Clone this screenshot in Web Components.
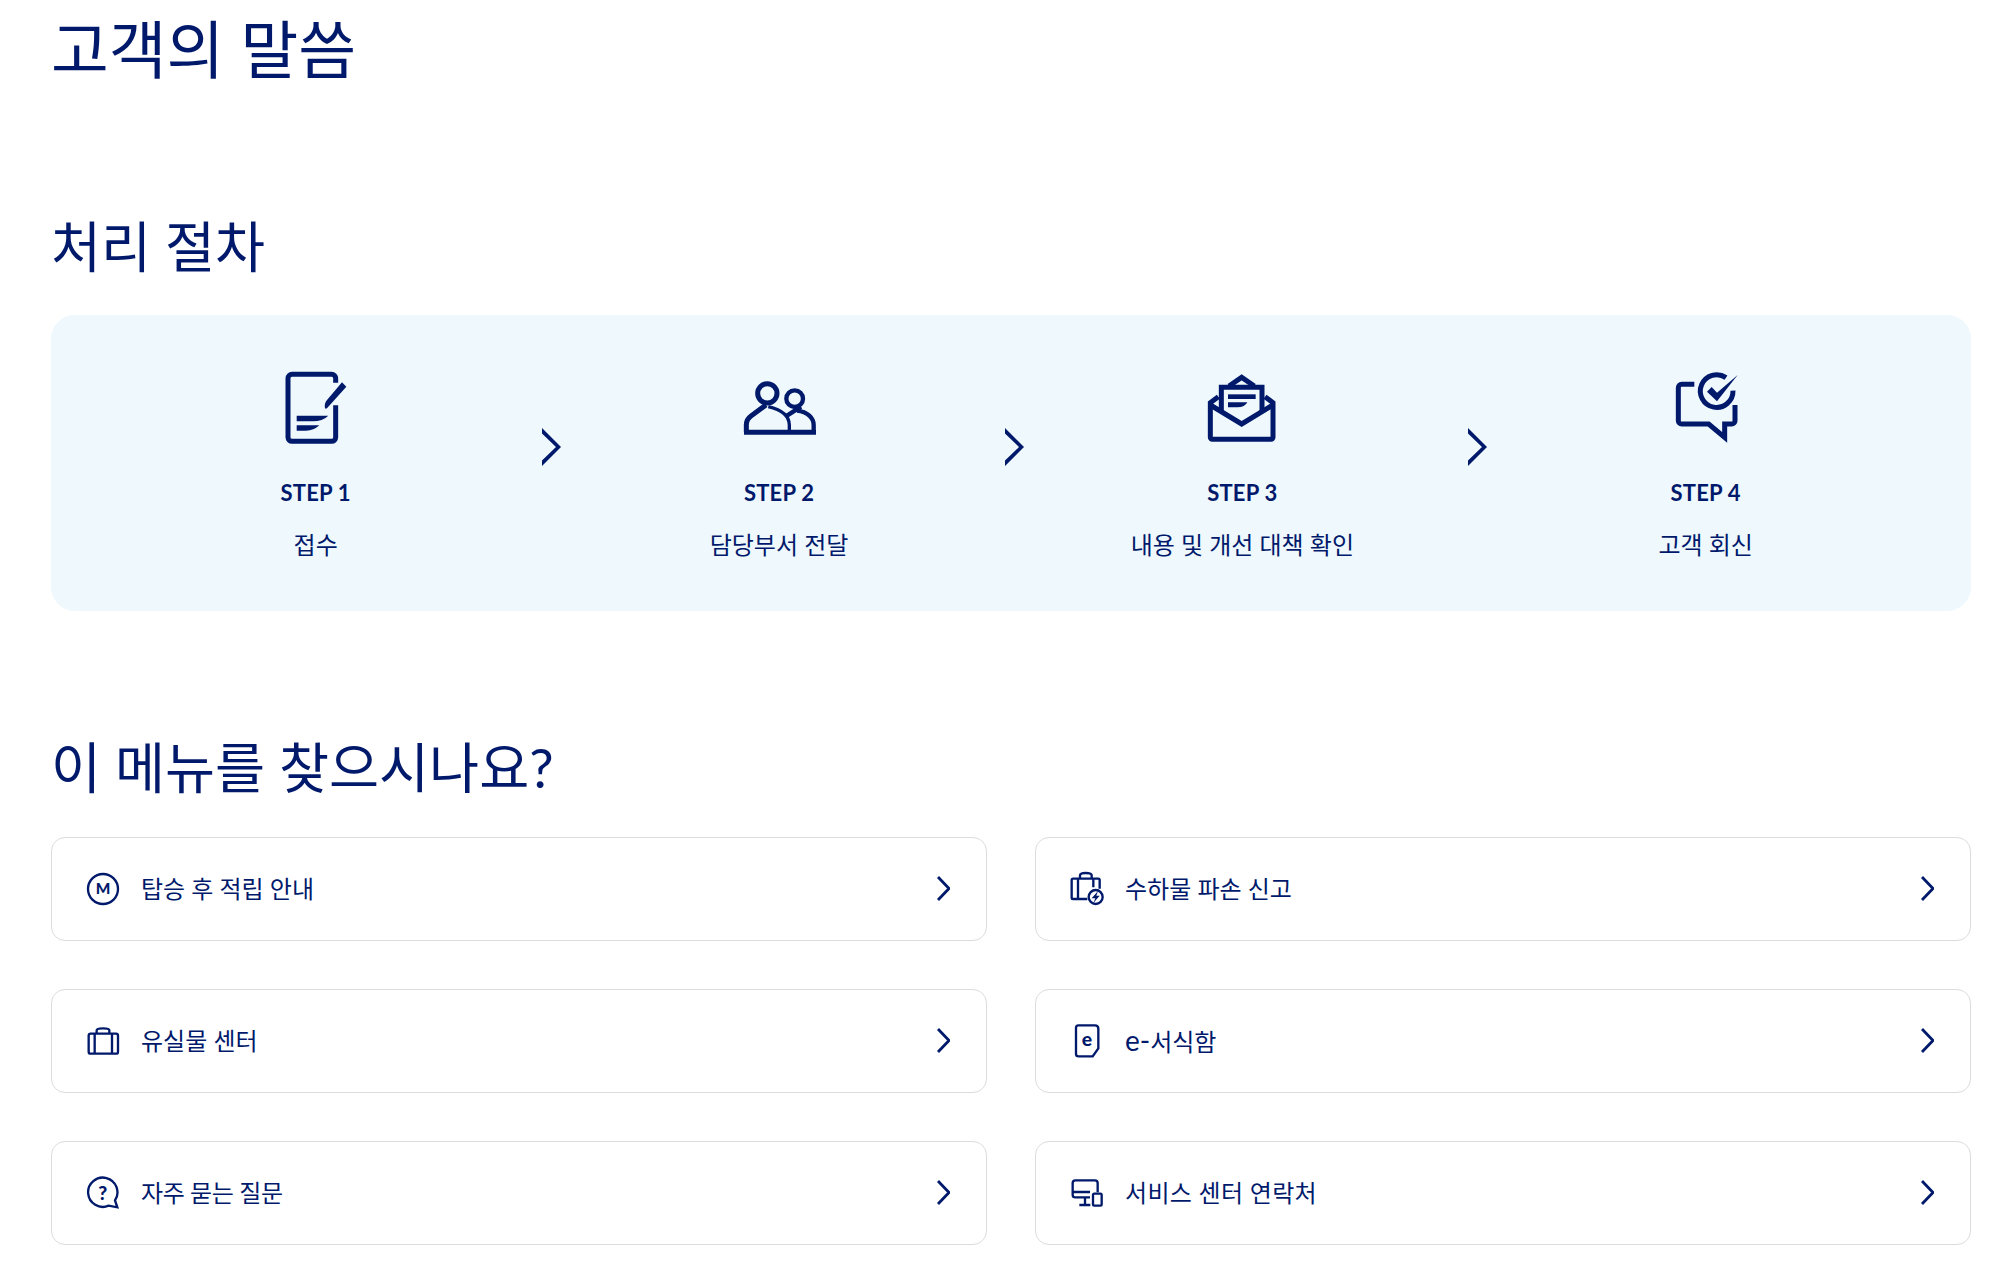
<!DOCTYPE html>
<html lang="ko"><head><meta charset="utf-8"><title>고객의 말씀</title>
<style>
html,body{margin:0;padding:0;background:#fff}
body{font-family:Lato,"Noto Sans CJK KR",sans-serif;color:#00196b}
</style></head><body>
<template id="t-page"><style>
:host{display:flex;flex-direction:column;padding:17px 36px 26px 51px;box-sizing:border-box;height:1270px;overflow:hidden}
h1,h2{margin:0;font-weight:400;color:inherit}
h1{font-size:62.800px;line-height:64px;margin-bottom:137px}
h2{font-size:54.400px;line-height:56px}
.h2a{margin-bottom:41px}
.h2b{margin:128px 0 42px}
</style>
<h1>고객의 말씀</h1>
<h2 class="h2a">처리 절차</h2>
<slot name="steps"></slot>
<h2 class="h2b">이 메뉴를 찾으시나요?</h2>
<slot name="menu"></slot>
</template>

<template id="t-steps"><style>
:host{display:flex;align-items:flex-start;background:#eef8fd;border-radius:24px;padding:53px 47.700px 49px 47px;box-sizing:border-box}
</style><slot></slot></template>

<template id="t-step"><style>
:host{display:flex;flex-direction:column;align-items:center;flex:1 1 0;min-width:0;text-align:center}
.i{width:80px;height:80px;display:block}
::slotted(svg){width:80px;height:80px;display:block}
.s{font-size:22px;line-height:24px;font-weight:700;margin-top:33px;letter-spacing:.2px}
.l{font-size:24px;line-height:34px;margin-top:23px;white-space:nowrap}
</style><div class="i"><slot name="icon"></slot></div><div class="s"><slot name="step"></slot></div><div class="l"><slot></slot></div></template>

<template id="t-next"><style>
:host{flex:0 0 28px;display:flex;justify-content:center;height:38px;margin-top:60px;position:relative}
svg{width:19px;height:38px;display:block;margin-left:8px;flex:none}
</style><svg viewBox="0 0 19 38"><path fill="#00196b" d="M0 0L19 19L0 38V32.500L14 19L0 5.500Z"/></svg></template>

<template id="t-grid"><style>
:host{display:grid;grid-template-columns:1fr 1fr;column-gap:48px;row-gap:48px}
</style><slot></slot></template>

<template id="t-link"><style>
:host{display:flex;align-items:center;height:104px;box-sizing:border-box;border:1.500px solid #dcdcdc;border-radius:14px;padding:0 36.500px 0 33px;background:#fff}
::slotted(svg){width:36px;height:36px;flex:none;display:block}
.t{flex:1;margin-left:20px;font-size:24px;line-height:34px;white-space:nowrap}
.c{width:13px;height:25px;flex:none;display:block;margin-top:-1px}
</style><slot name="icon"></slot><div class="t"><slot></slot></div>
<svg class="c" viewBox="0 0 13 25"><path fill="none" stroke="#00196b" stroke-width="2.800" d="M1 1L12 12.500L1 24"/></svg></template>

<page-root>
<step-panel slot="steps">
<step-item>
<svg slot="icon" viewBox="105 54 240 240"><g fill="#00196b"><path fill="none" stroke="#00196b" stroke-width="15" d="M284 166V262a12 12 0 0 1-12 12H153a12 12 0 0 1-12-12V85a12 12 0 0 1 12-12H272a12 12 0 0 1 12 12V98"/><path d="M303 97L316 110L262 170Q254 180 252 174Q249 160 258 150Z"/><path d="M167 197H262Q245 214 215 214H167Z"/><path d="M167 226H235Q218 242 195 242H167Z"/></g></svg>
<span slot="step">STEP 1</span>접수</step-item>
<step-next></step-next>
<step-item>
<svg slot="icon" viewBox="144 54 240 240"><g fill="none" stroke="#00196b"><circle cx="229" cy="130" r="29" stroke-width="15"/><circle cx="311" cy="146" r="25" stroke-width="13"/><path stroke-width="15" d="M159 247H375M166 247V225Q166 208 180 198L225 165"/><path stroke-width="10" d="M232 170C265 178 295 195 295 225V247"/><path stroke-width="13" d="M330 170L288 197M318 182C350 185 368 205 368 225V247"/></g></svg>
<span slot="step">STEP 2</span>담당부서 전달</step-item>
<step-next></step-next>
<step-item>
<svg slot="icon" viewBox="156 54 240 240"><g fill="none" stroke="#00196b" stroke-width="15"><path d="M205 140L181 158V262a6 6 0 0 0 6 6H363a6 6 0 0 0 6-6V158L345 140"/><path d="M237 108L275 82L313 108"/><path d="M181 165L275 222L369 165"/><path d="M214 186V112H336V186"/></g><g fill="#00196b"><path d="M234 133H317V147H234Z"/><path d="M234 157H292Q285 172 262 172H234Z"/></g></svg>
<span slot="step">STEP 3</span>내용 및 개선 대책 확인</step-item>
<step-next></step-next>
<step-item>
<svg slot="icon" viewBox="165 54 240 240"><g fill="none" stroke="#00196b" stroke-width="15"><path d="M250 103H212a10 10 0 0 0-10 10V212a10 10 0 0 0 10 10H293L341 262V222H362a10 10 0 0 0 10-10V165"/><path d="M345 83A49 49 0 1 0 366 122"/></g><path fill="#00196b" d="M288 125L302 111L318 128L380 75L318 154Z"/></svg>
<span slot="step">STEP 4</span>고객 회신</step-item>
</step-panel>
<menu-grid slot="menu">
<menu-link><svg slot="icon" viewBox="135 123 108 108"><circle cx="189" cy="177" r="45" fill="none" stroke="#00196b" stroke-width="7"/><text x="189" y="193" text-anchor="middle" font-family="Lato,sans-serif" font-weight="900" font-size="46" fill="#00196b">M</text></svg>탑승 후 적립 안내</menu-link>
<menu-link><svg slot="icon" viewBox="117 123 108 108"><g fill="none" stroke="#00196b" stroke-width="7"><path d="M172 207H129Q125 207 125 203V150Q125 146 129 146H205Q209 146 209 150V176"/><path d="M144 146V207M190 146V172M150 146V136Q150 129 167 129Q185 129 185 136V146"/><circle cx="197" cy="201" r="21"/></g><path fill="#00196b" d="M204 183L185 205H196L190 219L209 197H199Z"/></svg>수하물 파손 신고</menu-link>
<menu-link><svg slot="icon" viewBox="135 114 108 108"><g fill="none" stroke="#00196b" stroke-width="7"><rect x="146" y="146" width="88" height="60" rx="6"/><path d="M164 146V206M216 146V206M170 146V136Q170 130 189 130Q208 130 208 136V146"/></g></svg>유실물 센터</menu-link>
<menu-link><svg slot="icon" viewBox="117 114 108 108"><path fill="none" stroke="#00196b" stroke-width="7" d="M145 121H195Q205 121 205 131V190L188 214H146Q138 214 138 206V128Q138 121 145 121Z"/><text x="171" y="184" text-anchor="middle" font-family="Lato,sans-serif" font-weight="900" font-size="58" fill="#00196b">e</text></svg><span style="font-size:28px">e-</span>서식함</menu-link>
<menu-link style="letter-spacing:-.4px"><svg slot="icon" viewBox="135 120 108 108"><path fill="none" stroke="#00196b" stroke-width="7" d="M206 212A44 44 0 1 1 225 196L232 217Z"/><text x="188" y="194" text-anchor="middle" font-family="Lato,sans-serif" font-weight="900" font-size="58" fill="#00196b">?</text></svg>자주 묻는 질문</menu-link>
<menu-link style="letter-spacing:.3px"><svg slot="icon" viewBox="117 120 108 108"><g fill="none" stroke="#00196b" stroke-width="7"><path d="M180 187H136Q128 187 128 179V144Q128 136 136 136H195Q203 136 203 144V172M128 171H180M165 187V209M148 210H181"/><rect x="189" y="176" width="26" height="36" rx="4"/></g></svg>서비스 센터 연락처</menu-link>
</menu-grid>
</page-root>
<script>
function reg(name,tid){customElements.define(name,class extends HTMLElement{constructor(){super();this.attachShadow({mode:'open'}).appendChild(document.getElementById(tid).content.cloneNode(true));}});}
reg('page-root','t-page');reg('step-panel','t-steps');reg('step-item','t-step');reg('step-next','t-next');reg('menu-grid','t-grid');reg('menu-link','t-link');
</script>
</body></html>
